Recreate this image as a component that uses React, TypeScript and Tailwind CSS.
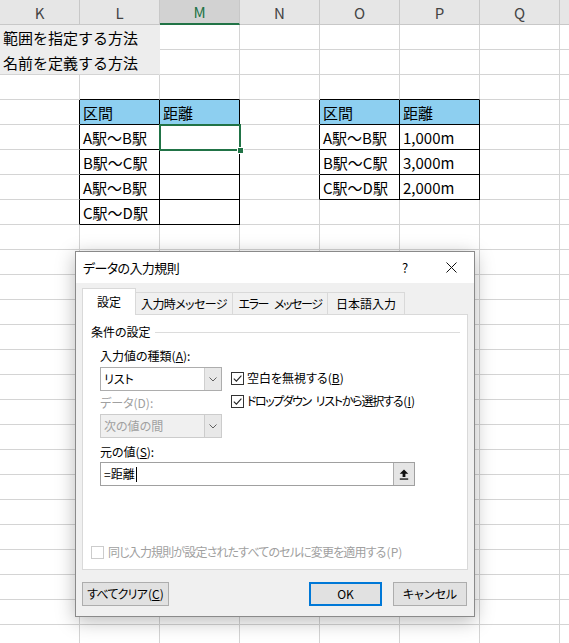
import React from "react";

const COLS = ["K", "L", "M", "N", "O", "P", "Q", ""];
const ROW_COUNT = 25;

// cell values keyed by "row-col"
const CELLS: Record<string, string> = {
  "3-1": "区間",
  "3-2": "距離",
  "3-4": "区間",
  "3-5": "距離",
  "4-1": "A駅〜B駅",
  "5-1": "B駅〜C駅",
  "6-1": "A駅〜B駅",
  "7-1": "C駅〜D駅",
  "4-4": "A駅〜B駅",
  "5-4": "B駅〜C駅",
  "6-4": "C駅〜D駅",
  "4-5": "1,000m",
  "5-5": "3,000m",
  "6-5": "2,000m",
};

function inTable(r: number, c: number) {
  if (r >= 3 && r <= 7 && c >= 1 && c <= 2) return true;
  if (r >= 3 && r <= 6 && c >= 4 && c <= 5) return true;
  return false;
}

function Cell({ r, c }: { r: number; c: number }) {
  const right = inTable(r, c) || inTable(r, c + 1);
  const bottom = inTable(r, c) || inTable(r + 1, c);
  const head = r === 3 && inTable(r, c);
  return (
    <div
      className={`w-[80px] h-[25px] shrink-0 flex items-center pl-[3px] border-r border-b whitespace-nowrap text-[15px] text-black ${
        right ? "border-r-black" : "border-r-[#d4d4d4]"
      } ${bottom ? "border-b-black" : "border-b-[#d4d4d4]"} ${head ? "bg-[#8dcff0]" : "bg-white"}`}
    >
      {CELLS[`${r}-${c}`]}
    </div>
  );
}

function Sheet() {
  return (
    <div className="flex flex-col">
      <div className="flex">
        {COLS.map((col, i) => (
          <div
            key={i}
            className={`w-[80px] h-[25px] shrink-0 flex items-center justify-center border-r border-r-[#c8c8c8] text-[15px] ${
              col === "M"
                ? "bg-[#d2d2d2] text-[#217346] border-b-2 border-b-[#217346]"
                : "bg-[#e6e6e6] text-[#444444] border-b border-b-[#c8c8c8]"
            }`}
          >
            {col}
          </div>
        ))}
      </div>
      {Array.from({ length: ROW_COUNT }).map((_, r) => (
        <div key={r} className="flex">
          {r <= 1 ? (
            <>
              <div
                className={`w-[160px] h-[25px] shrink-0 flex items-center pl-[3px] bg-[#ededed] border-r border-r-[#ededed] border-b text-[15px] whitespace-nowrap ${
                  r === 0 ? "border-b-[#ededed]" : "border-b-[#d4d4d4]"
                }`}
              >
                {r === 0 ? "範囲を指定する方法" : "名前を定義する方法"}
              </div>
              {COLS.slice(2).map((_, i) => (
                <Cell key={i} r={r} c={i + 2} />
              ))}
            </>
          ) : (
            COLS.map((_, c) => <Cell key={c} r={r} c={c} />)
          )}
        </div>
      ))}
    </div>
  );
}

function Check({ checked, disabled }: { checked?: boolean; disabled?: boolean }) {
  return (
    <span
      className={`w-[13px] h-[13px] shrink-0 border bg-white flex items-center justify-center ${
        disabled ? "border-[#cccccc]" : "border-[#333333]"
      }`}
    >
      {checked && (
        <svg viewBox="0 0 11 11" className="w-[11px] h-[11px]">
          <path d="M1.8 5.6 L4.4 8.2 L9.4 2.6" fill="none" stroke="#222" strokeWidth="1.1" />
        </svg>
      )}
    </span>
  );
}

function Combo({ value, disabled }: { value: string; disabled?: boolean }) {
  return (
    <div
      className={`w-[122px] h-[24px] flex border ${
        disabled ? "border-[#cccccc] bg-[#f0f0f0] text-[#a0a0a0]" : "border-[#adadad] bg-white text-black"
      }`}
    >
      <span className="flex-1 flex items-center pl-[3px]">{value}</span>
      <span
        className={`w-[17px] flex items-center justify-center border-l ${
          disabled ? "border-l-[#cccccc] bg-[#e8e8e8]" : "border-l-[#cfcfcf] bg-[#e8e8e8]"
        }`}
      >
        <svg viewBox="0 0 8 5" className="w-[8px] h-[5px]">
          <path d="M0.5 0.5 L4 4 L7.5 0.5" fill="none" stroke="#606060" />
        </svg>
      </span>
    </div>
  );
}

function Dialog() {
  return (
    <div className="absolute left-[75px] top-[251px] w-[400px] h-[366px] border border-[#8a8a8a] bg-[#f0f0f0] flex flex-col shadow-[0_4px_18px_rgba(0,0,0,0.28)] text-[12px] text-black [font-feature-settings:'palt']">
      {/* title bar */}
      <div className="h-[31px] bg-white flex items-center pl-[7px]">
        <span className="text-[13px] tracking-[-0.6px]">データの入力規則</span>
        <span className="ml-auto w-[46px] flex justify-center text-[13px]">?</span>
        <span className="w-[46px] flex justify-center">
          <svg viewBox="0 0 11 11" className="w-[11px] h-[11px]">
            <path d="M0.5 0.5 L10.5 10.5 M10.5 0.5 L0.5 10.5" stroke="#111" strokeWidth="1" />
          </svg>
        </span>
      </div>

      <div className="px-[6px] flex flex-col">
        {/* tabs */}
        <div className="mt-[5px] h-[26px] flex items-end">
          <div className="relative z-10 -mb-px w-[54px] h-[27px] bg-white border border-b-0 border-[#d9d9d9] flex items-center justify-center">
            設定
          </div>
          <div className="w-[97px] h-[22px] border border-l-0 border-b-0 border-[#d9d9d9] flex items-center justify-center tracking-[-0.6px]">
            入力時メッセージ
          </div>
          <div className="w-[95px] h-[22px] border border-l-0 border-b-0 border-[#d9d9d9] flex items-center justify-center">
            <span className="tracking-[-1.4px]">エラー</span>
            <span className="w-[6px]" />
            <span className="tracking-[-1.4px]">メッセージ</span>
          </div>
          <div className="w-[77px] h-[22px] border border-l-0 border-b-0 border-[#d9d9d9] flex items-center justify-center">
            日本語入力
          </div>
        </div>

        {/* panel */}
        <div className="relative h-[256px] bg-white border border-[#d9d9d9] flex flex-col">
          <div className="mt-[9px] h-[16px] flex items-center pl-[8px] pr-[7px]">
            <span>条件の設定</span>
            <span className="flex-1 h-px bg-[#dcdcdc] ml-[4px]" />
          </div>
          <div className="mt-[8px] h-[16px] flex items-center pl-[17px]">
            入力値の種類(<u>A</u>):
          </div>
          <div className="mt-[3px] pl-[17px] flex">
            <div className="flex flex-col">
              <Combo value="リスト" />
              <div className="mt-[4px] h-[16px] flex items-center text-[#a0a0a0]">データ(D):</div>
              <div className="mt-[3px]">
                <Combo value="次の値の間" disabled />
              </div>
            </div>
            <div className="ml-[9px] flex flex-col">
              <div className="mt-[3px] h-[16px] flex items-center gap-[3px]">
                <Check checked />
                <span>
                  空白を無視する(<u>B</u>)
                </span>
              </div>
              <div className="mt-[7px] h-[16px] flex items-center gap-[3px]">
                <Check checked />
                <span className="flex items-center">
                  <span className="tracking-[-1.5px]">ドロップダウン</span>
                  <span className="w-[5px]" />
                  <span className="tracking-[-1.2px]">リストから選択する</span>
                  <span className="ml-[1px]">
                    (<u>I</u>)
                  </span>
                </span>
              </div>
            </div>
          </div>
          <div className="mt-[6px] h-[16px] flex items-center pl-[17px]">
            元の値(<u>S</u>):
          </div>
          <div className="mt-[2px] ml-[17px] w-[315px] h-[24px] border border-[#a0a0a0] bg-white flex">
            <span className="flex-1 flex items-center pl-[3px]">
              =距離
              <span className="ml-px w-px h-[15px] bg-black" />
            </span>
            <span className="w-[21px] bg-[#e5e5e5] border-l border-l-[#adadad] flex items-center justify-center">
              <svg viewBox="0 0 10 11" className="w-[10px] h-[11px]">
                <path d="M5 0.5 L9.3 4.8 H6.4 V8 H3.6 V4.8 H0.7 Z" fill="#111" />
                <rect x="0.8" y="9.4" width="8.4" height="1.3" fill="#111" />
              </svg>
            </span>
          </div>
          <div className="mt-auto mb-[9px] h-[16px] flex items-center pl-[8px] gap-[4px] text-[#a0a0a0]">
            <Check disabled />
            <span>
              <span className="tracking-[-0.85px]">同じ入力規則が設定されたすべてのセルに変更を適用する</span>
              <span className="ml-[1px]">(P)</span>
            </span>
          </div>
        </div>

        {/* buttons */}
        <div className="mt-[12px] h-[24px] flex">
          <div className="w-[87px] h-[24px] border border-[#adadad] bg-[#e1e1e1] flex items-center justify-center">
            <span className="tracking-[-0.8px]">すべてクリア</span>
            <span className="ml-[1px]">
              (<u>C</u>)
            </span>
          </div>
          <div className="ml-auto w-[73px] h-[24px] border-2 border-[#0078d7] bg-[#e1e1e1] flex items-center justify-center">
            OK
          </div>
          <div className="ml-[11px] mr-px w-[74px] h-[24px] border border-[#adadad] bg-[#e1e1e1] flex items-center justify-center">
            キャンセル
          </div>
        </div>
      </div>
    </div>
  );
}

export default function App() {
  return (
    <div className="relative w-[569px] h-[643px] overflow-hidden bg-white font-['Noto_Sans_CJK_JP',sans-serif] leading-none">
      <Sheet />
      {/* active cell */}
      <div className="absolute left-[159px] top-[124px] w-[82px] h-[27px] border-2 border-[#217346]" />
      <div className="absolute left-[237px] top-[147px] w-[7px] h-[7px] bg-[#217346] border border-white" />
      <Dialog />
    </div>
  );
}
